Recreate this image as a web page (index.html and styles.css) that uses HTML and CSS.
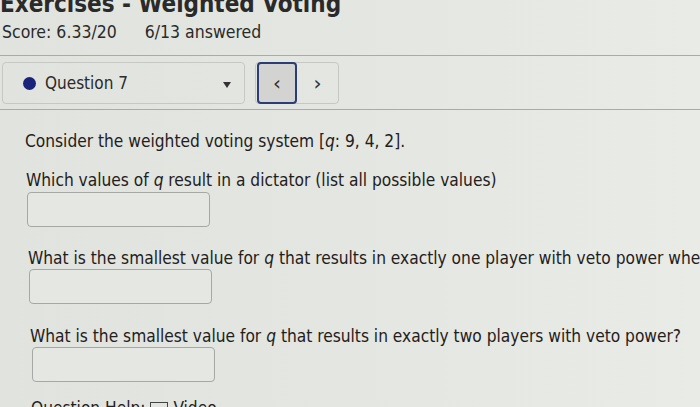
FILE: index.html
```html
<!DOCTYPE html>
<html>
<head>
<meta charset="utf-8">
<link rel="stylesheet" href="styles.css">
</head>
<body>
<div class="page">
  <h1 class="title">Exercises - Weighted Voting</h1>
  <div class="score">
    <span>Score: 6.33/20</span>
    <span class="answered">6/13 answered</span>
  </div>
  <div class="toolbar">
    <div class="select">
      <span class="dot"></span>
      <span class="qname">Question 7</span>
      <span class="caret"></span>
    </div>
    <div class="nav">
      <button class="navbtn prev">&lsaquo;</button>
      <button class="navbtn next">&rsaquo;</button>
    </div>
  </div>
  <div class="content">
    <p class="intro">Consider the weighted voting system [<i>q</i>: 9, 4, 2].</p>
    <div class="part p1">
      <p class="q">Which values of <i>q</i> result in a dictator (list all possible values)</p>
      <div class="input"></div>
    </div>
    <div class="part p2">
      <p class="q">What is the smallest value for <i>q</i> that results in exactly one player with veto power when</p>
      <div class="input"></div>
    </div>
    <div class="part p3">
      <p class="q">What is the smallest value for <i>q</i> that results in exactly two players with veto power?</p>
      <div class="input"></div>
    </div>
    <div class="help">Question Help: <span class="vid"></span> Video</div>
  </div>
</div>
</body>
</html>
```
FILE: styles.css
```css
html, body {
  margin: 0;
  padding: 0;
  background: #e3e5e0;
  overflow: hidden;
}
.page {
  width: 700px;
  height: 407px;
  overflow: hidden;
  font-family: "DejaVu Sans Condensed", "DejaVu Sans", sans-serif;
  color: #1f2020;
  background: linear-gradient(90deg, #e1e3de 0%, #e4e6e1 50%, #e9ebe7 100%);
}
.title {
  margin: -8px 0 0 0;
  font-size: 24px;
  line-height: 24px;
  font-weight: bold;
  color: #2a2a2a;
  white-space: nowrap;
}
.score {
  display: flex;
  gap: 28px;
  font-size: 17.5px;
  line-height: 20px;
  margin-top: 6px;
  padding-left: 2px;
  color: #2a2a2a;
}
.toolbar {
  margin-top: 13px;
  border-top: 1px solid #a9aba8;
  border-bottom: 1px solid #a9aba8;
  padding: 6px 0 5px 2px;
  display: flex;
  gap: 10px;
}
.select {
  width: 243px;
  height: 42px;
  border: 1px solid #c6c8c5;
  border-radius: 4px;
  display: flex;
  align-items: center;
  padding-left: 20px;
  box-sizing: border-box;
  font-size: 17px;
}
.dot {
  width: 13px;
  height: 13px;
  border-radius: 50%;
  background: #1a237a;
  margin-right: 9px;
}
.qname {
  flex: 1;
  color: #2a2a2a;
}
.caret {
  width: 0;
  height: 0;
  border-left: 4px solid transparent;
  border-right: 4px solid transparent;
  border-top: 6px solid #333;
  margin-right: 13px;
  margin-top: 4px;
}
.nav {
  display: flex;
  border: 1px solid #c6c8c5;
  border-radius: 4px;
  padding: 0;
  width: 84px;
  height: 42px;
  box-sizing: border-box;
}
.navbtn {
  flex: 1;
  border: none;
  background: transparent;
  font-family: "DejaVu Sans", sans-serif;
  font-size: 20px;
  color: #333;
  padding: 0;
}
.prev {
  flex: 0 0 40px;
  margin: -1px 0 0 1px;
  border: 2px solid #2b3d74;
  border-radius: 4px;
  background: #d3d4d2;
  height: 42px;
}
.content {
  padding-left: 25px;
}
.intro {
  margin: 22px 0 0 0;
  font-size: 17.2px;
  line-height: 18px;
}
.q {
  margin: 0;
  font-size: 17.2px;
  line-height: 18px;
  white-space: nowrap;
}
.p1 { margin-top: 21px; }
.p1 .q { margin-left: 1px; }
.p2 { margin-top: 22px; }
.p2 .q { margin-left: 3px; }
.p3 { margin-top: 23px; }
.p3 .q { margin-left: 5px; }
.input {
  width: 183px;
  height: 35px;
  border: 1px solid #a6a8a5;
  border-radius: 4px;
  box-sizing: border-box;
  margin-top: 3px;
  margin-left: 2px;
  background: #e5e7e2;
}
.p2 .input { margin-left: 4px; margin-top: 2px; }
.p3 .input { margin-left: 7px; margin-top: 2px; }
.help {
  margin-top: 17px;
  margin-left: 6px;
  font-size: 17.2px;
  line-height: 18px;
  white-space: nowrap;
}
.vid {
  display: inline-block;
  width: 16px;
  height: 12px;
  border: 1px solid #444;
  vertical-align: middle;
}
```
